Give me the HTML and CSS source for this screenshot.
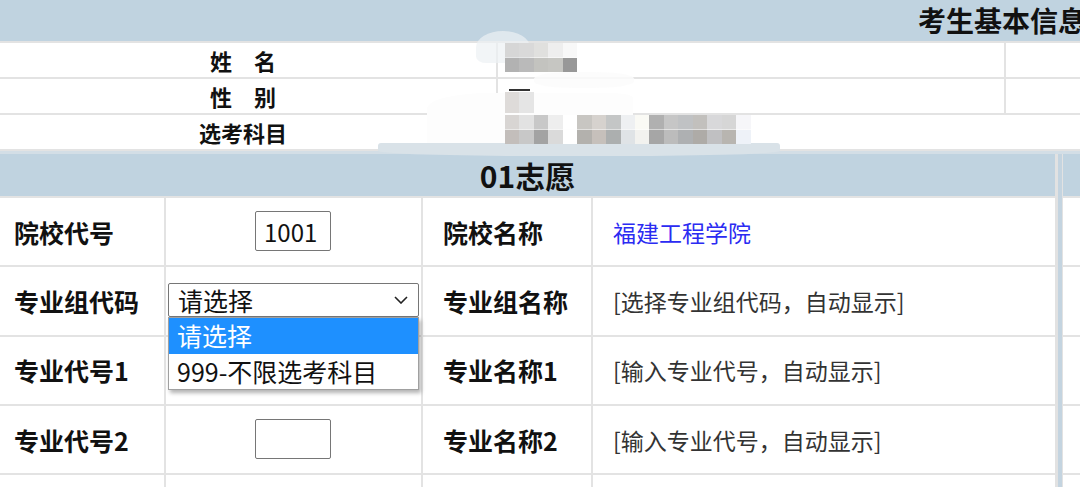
FILE: index.html
```html
<!DOCTYPE html>
<html lang="zh-CN">
<head>
<meta charset="UTF-8">
<meta name="viewport" content="width=device-width, initial-scale=1.0">
<title>志愿填报</title>
<link rel="stylesheet" href="styles.css">
</head>
<body>
<div class="page">

  <!-- 考生基本信息 -->
  <section class="basic">
    <div class="basic-title">考生基本信息</div>
    <div class="basic-row">
      <div class="basic-cell basic-label">姓　名</div>
      <div class="basic-cell basic-value"><span class="mosaic mosaic-name"></span></div>
      <div class="basic-cell"></div>
    </div>
    <div class="basic-row">
      <div class="basic-cell basic-label">性　别</div>
      <div class="basic-cell basic-value"><span class="mosaic mosaic-gender"></span></div>
      <div class="basic-cell"></div>
    </div>
    <div class="basic-row span">
      <div class="basic-cell basic-label">选考科目</div>
      <div class="basic-cell basic-value"><span class="mosaic mosaic-subjects"></span></div>
    </div>

    <!-- privacy smudges painted over the screenshot -->
    <div class="smudge smudge-a"></div>
    <div class="smudge smudge-b"></div>
    <div class="smudge smudge-d"></div>
    <div class="smudge smudge-e"></div>
  </section>

  <!-- 志愿 -->
  <section class="wishes">
    <div class="wish">
      <div class="wish-title">01志愿</div>
      <div class="wish-grid">
        <div class="cell label">院校代号</div>
        <div class="cell center"><input class="code-input" type="text" value="1001"></div>
        <div class="cell label pad">院校名称</div>
        <div class="cell value school">福建工程学院</div>

        <div class="cell label">专业组代码</div>
        <div class="cell">
          <div class="select-box">
            <span>请选择</span>
            <svg class="chevron" width="14" height="8" viewBox="0 0 14 8"><polyline points="1,1 7,7 13,1" fill="none" stroke="#222" stroke-width="1.6"/></svg>
            <ul class="select-list">
              <li class="selected">请选择</li>
              <li>999-不限选考科目</li>
            </ul>
          </div>
        </div>
        <div class="cell label pad">专业组名称</div>
        <div class="cell value">[选择专业组代码，自动显示]</div>

        <div class="cell label">专业代号1</div>
        <div class="cell center"><input class="code-input" type="text" value=""></div>
        <div class="cell label pad">专业名称1</div>
        <div class="cell value">[输入专业代号，自动显示]</div>

        <div class="cell label">专业代号2</div>
        <div class="cell center"><input class="code-input" type="text" value=""></div>
        <div class="cell label pad">专业名称2</div>
        <div class="cell value">[输入专业代号，自动显示]</div>

        <!-- next row starts at the bottom edge -->
        <div class="cell"></div>
        <div class="cell"></div>
        <div class="cell"></div>
        <div class="cell"></div>
      </div>
    </div>

    <div class="wish-sep"></div>

    <!-- 02志愿: only its left edge is in view -->
    <div class="wish">
      <div class="wish-title"></div>
      <div class="wish-grid">
        <div class="cell"></div><div class="cell"></div><div class="cell"></div><div class="cell"></div>
        <div class="cell"></div><div class="cell"></div><div class="cell"></div><div class="cell"></div>
        <div class="cell"></div><div class="cell"></div><div class="cell"></div><div class="cell"></div>
        <div class="cell"></div><div class="cell"></div><div class="cell"></div><div class="cell"></div>
        <div class="cell"></div><div class="cell"></div><div class="cell"></div><div class="cell"></div>
      </div>
    </div>
  </section>

</div>
</body>
</html>
```

FILE: styles.css
```css
body {
  margin: 0;
  padding: 0;
  background: #fff;
  color: #111;
  font-family: "Noto Sans CJK SC", "Noto Sans", sans-serif;
  overflow: hidden;
}

.page {
  width: 1080px;
  height: 487px;
  overflow: hidden;
  position: relative;
}

/* Basic info block */
.basic {
  width: 2004px;
  position: relative;
  z-index: 2;
}

.basic-title {
  height: 41px;
  line-height: 41px;
  background: #c0d3e0;
  border-bottom: 2px solid #e3e3e3;
  text-align: center;
  font-size: 28px;
  font-weight: 700;
}

.basic-row {
  display: grid;
  grid-template-columns: 498px 508px 1fr;
  height: 36px;
}

.basic-row.span {
  grid-template-columns: 498px 1fr;
}

.basic-cell {
  box-sizing: border-box;
  border-bottom: 2px solid #e3e3e3;
  border-right: 2px solid #e3e3e3;
}

.basic-label {
  text-align: center;
  padding-right: 10px;
  font-size: 22px;
  font-weight: 700;
  line-height: 34px;
}

.basic-value {
  display: flex;
  align-items: flex-start;
  padding-left: 7px;
}

/* blurred personal data */
.mosaic {
  display: block;
  position: relative;
  z-index: 1;
}

.mosaic-name {
  width: 72px;
  height: 29px;
  background:
    linear-gradient(to right, #d6d6d6 0 14px, #d9d9d9 14px 29px, #e0e0de 29px 43px, #eeeeee 43px 58px, #f8f8f8 58px 72px) top / 100% 50% no-repeat,
    linear-gradient(to right, #b2b2b2 0 14px, #bababa 14px 29px, #c3c3bf 29px 43px, #c6c6c2 43px 58px, #989898 58px 72px) bottom / 100% 50% no-repeat;
}

.mosaic-gender {
  width: 29px;
  height: 21px;
  margin-top: 13px;
  background: linear-gradient(to right, #dedbd9 0 14px, #e5e5e5 14px 29px);
}

.mosaic-gender::before {
  content: "";
  position: absolute;
  left: 4px;
  top: -3px;
  width: 21px;
  height: 2px;
  background: #333;
}

.mosaic-subjects {
  width: 246px;
  height: 29px;
  background:
    linear-gradient(to right, #d8d5d3 0 14px, #e2e2e2 14px 29px, #c8c8c8 29px 43px, #eeeeee 43px 58px, #fff 58px 72px, #c8c6c2 72px 87px, #d6d2ce 87px 101px, #c4c6c6 101px 116px, #eef0f2 116px 130px, #fafaf5 130px 144px, #b0b0b0 144px 159px, #c6c6c6 159px 173px, #c0c2c4 173px 188px, #c2c0bd 188px 202px, #d8d8da 202px 217px, #d6d6d6 217px 231px, #f6f6f9 231px 246px) top / 100% 50% no-repeat,
    linear-gradient(to right, #c3bebb 0 14px, #c8c8c8 14px 29px, #a3a3a3 29px 43px, #dadada 43px 58px, #fff 58px 72px, #b3b1ad 72px 87px, #c6c0bb 87px 101px, #acafaf 101px 116px, #dfe3e6 116px 130px, #f2f2ef 130px 144px, #a6a6a6 144px 159px, #bcbcbc 159px 173px, #aeb0b2 173px 188px, #aeaba7 188px 202px, #c0c0c2 202px 217px, #b8b5b0 217px 231px, #eef2f8 231px 246px) bottom / 100% 50% no-repeat;
}

.smudge {
  position: absolute;
}

.smudge-a {
  left: 476px;
  top: 31px;
  width: 54px;
  height: 32px;
  background: rgba(236, 241, 244, 0.7);
  border-radius: 50% 50% 20% 20%;
}

.smudge-b {
  left: 427px;
  top: 93px;
  width: 206px;
  height: 52px;
  background: #fdfdfd;
  border-radius: 30% 10% 0 0;
}

.smudge-d {
  left: 534px;
  top: 72px;
  width: 100px;
  height: 16px;
  background: rgba(252, 252, 252, 0.85);
  border-radius: 40%;
}

.smudge-e {
  left: 378px;
  top: 143px;
  width: 402px;
  height: 13px;
  background: #d9e2e8;
  border-radius: 3px 3px 40% 40%;
}

/* Wish tables */
.wishes {
  display: flex;
  border-top: 3px solid #d3dee6;
  height: 336px;
}

.wish {
  width: 1055px;
  flex: none;
}

.wish-sep {
  flex: none;
  width: 4px;
  background: #c4d4e0;
  border-left: 3px solid #e2e2e2;
  border-right: 1px solid #e2e2e2;
}

.wish-title {
  height: 42px;
  line-height: 42px;
  background: #c0d3e0;
  border-bottom: 2px solid #e3e3e3;
  text-align: center;
  font-size: 30px;
  font-weight: 700;
}

.wish-grid {
  display: grid;
  grid-template-columns: 166px 257px 170px 462px;
  grid-auto-rows: 69.33px;
}

.cell {
  box-sizing: border-box;
  border-right: 2px solid #e3e3e3;
  border-bottom: 2px solid #e3e3e3;
  display: flex;
  align-items: center;
}

.cell:nth-child(4n) {
  border-right: none;
}

.cell.label {
  padding-left: 14px;
  font-size: 25px;
  font-weight: 700;
}

.cell.label.pad {
  padding-left: 20px;
}

.cell.center {
  justify-content: center;
}

.cell.value {
  padding-left: 20px;
  font-size: 23px;
  color: #333;
}

.cell.school {
  color: #2b2bf2;
}

.code-input {
  box-sizing: border-box;
  width: 76px;
  height: 40px;
  margin: 0 1px 1px 0;
  padding: 0 8px;
  border: 1px solid #767676;
  border-radius: 2px;
  font-family: inherit;
  font-size: 24px;
  color: #111;
  background: #fff;
}

/* Open select */
.select-box {
  position: relative;
  box-sizing: border-box;
  width: 251px;
  height: 34px;
  margin: 0 0 2px 2px;
  padding: 0 10px 0 9px;
  border: 1px solid #767676;
  border-radius: 2px;
  background: #fff;
  display: flex;
  align-items: center;
  justify-content: space-between;
  font-size: 25px;
  color: #111;
  z-index: 3;
}

.chevron {
  margin-top: 1px;
}

.select-list {
  position: absolute;
  top: 33px;
  left: -1px;
  width: 251px;
  box-sizing: border-box;
  margin: 0;
  padding: 0;
  list-style: none;
  background: #fff;
  border: 1px solid #a0a0a0;
  box-shadow: 2px 3px 4px rgba(0, 0, 0, 0.3);
}

.select-list li {
  height: 35px;
  line-height: 35px;
  padding-left: 8px;
  font-size: 25px;
  white-space: nowrap;
}

.select-list li.selected {
  height: 36px;
  background: #1e90ff;
  color: #fff;
}
```
